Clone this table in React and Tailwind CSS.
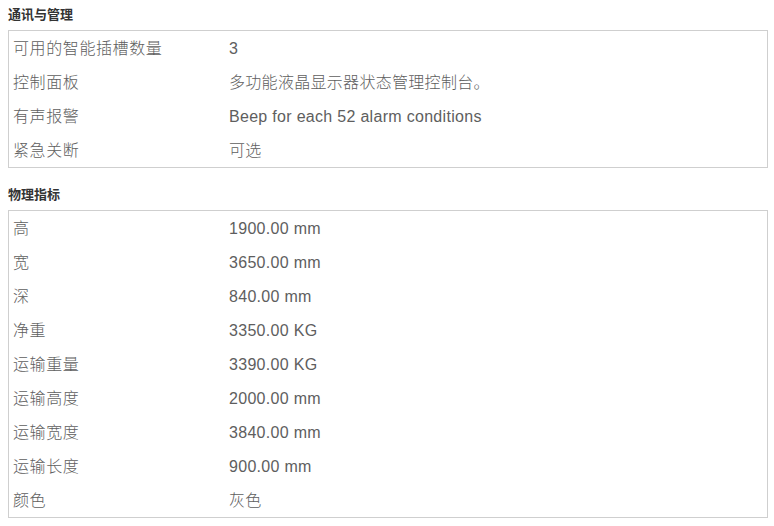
import React from 'react';

const sections = [
  {
    title: '通讯与管理',
    rows: [
      ['可用的智能插槽数量', '3'],
      ['控制面板', '多功能液晶显示器状态管理控制台。'],
      ['有声报警', 'Beep for each 52 alarm conditions'],
      ['紧急关断', '可选'],
    ],
  },
  {
    title: '物理指标',
    rows: [
      ['高', '1900.00 mm'],
      ['宽', '3650.00 mm'],
      ['深', '840.00 mm'],
      ['净重', '3350.00 KG'],
      ['运输重量', '3390.00 KG'],
      ['运输高度', '2000.00 mm'],
      ['运输宽度', '3840.00 mm'],
      ['运输长度', '900.00 mm'],
      ['颜色', '灰色'],
    ],
  },
];

const SpecSection = ({ title, rows, first }) => (
  <div className={first ? 'pt-[5px]' : 'pt-[17px]'}>
    <h3 className="text-[13px] leading-[20px] font-bold text-[#333]">{title}</h3>
    <div className="mt-[5px] w-[760px] border border-[#cfcfcf]">
      {rows.map(([label, value], i) => (
        <div key={i} className="flex h-[34px] items-center pt-px text-[16px] font-light text-[#5e5e5e]">
          <span className="w-[220px] pl-[4px] tracking-[0.6px]">{label}</span>
          <span className="tracking-[0.3px]">{value}</span>
        </div>
      ))}
    </div>
  </div>
);

export default function App() {
  return (
    <div
      className="w-[774px] h-[526px] bg-white px-[8px]"
      style={{ fontFamily: '"Liberation Sans", Arial, "Noto Sans CJK SC", sans-serif' }}
    >
      {sections.map((s, i) => (
        <SpecSection key={i} title={s.title} rows={s.rows} first={i === 0} />
      ))}
    </div>
  );
}
